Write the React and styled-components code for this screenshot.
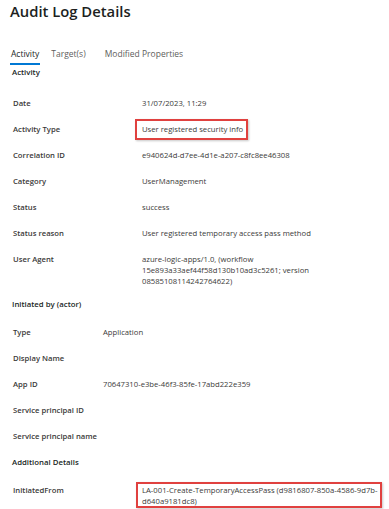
import React from 'react'
import styled, { createGlobalStyle } from 'styled-components'

const GlobalStyle = createGlobalStyle`
  html, body {
    margin: 0;
    padding: 0;
    background: #ffffff;
  }
  body {
    font-family: 'Segoe UI', 'Open Sans', 'Noto Sans', sans-serif;
    color: #323130;
  }
`

const Panel = styled.div`
  width: 389px;
  height: 509px;
  overflow: hidden;
  padding: 1px 0 0 10px;
  box-sizing: border-box;
`

const Title = styled.h1`
  margin: 0;
  font-size: 14.8px;
  line-height: 20px;
  font-weight: 600;
  color: #201f1e;
`

const Tabs = styled.div`
  display: flex;
  gap: 10px;
  margin-top: 27px;
`

const Tab = styled.div`
  font-size: 8.5px;
  line-height: 11px;
  padding: 0 1px 4px;
  color: ${props => (props.active ? '#201f1e' : '#605e5c')};
  border-bottom: 2px solid ${props => (props.active ? '#0078d4' : 'transparent')};
  margin-right: ${props => props.gapAfter || 0}px;
`

const SectionTitle = styled.div`
  font-size: 7.8px;
  font-weight: 600;
  line-height: 11px;
  padding-left: 2px;
  margin-top: ${props => props.top || 0}px;
  color: #201f1e;
`

const Rows = styled.div`
  display: grid;
  grid-template-columns: ${props => props.labelWidth}px 1fr;
  padding-left: 3px;
  margin-top: ${props => props.top || 0}px;
  row-gap: 15px;
`

const Label = styled.div`
  font-size: 7.7px;
  line-height: 11px;
  font-weight: 600;
  white-space: nowrap;
  color: #3b3a39;
`

const Value = styled.div`
  font-size: 7.7px;
  line-height: 11px;
  white-space: nowrap;
  color: #3b3a39;
`

const Highlight = styled.span`
  display: inline-block;
  box-sizing: border-box;
  width: ${props => props.width}px;
  margin: ${props => (props.tight ? '-3px 0 -2px -6px' : '-5px 0 -5px -7px')};
  padding: ${props => (props.tight ? '1px 4px 0' : '3px 5px')};
  line-height: ${props => (props.tight ? '10.5px' : '11px')};
  border: 2px solid #e0413f;
  box-shadow: 1px 1px 2px rgba(0, 0, 0, 0.22);
`

const activity = [
  ['Date', '31/07/2023, 11:29'],
  ['Activity Type', <Highlight width={113}>User registered security info</Highlight>],
  ['Correlation ID', 'e940624d-d7ee-4d1e-a207-c8fc8ee46308'],
  ['Category', 'UserManagement'],
  ['Status', 'success'],
  ['Status reason', 'User registered temporary access pass method'],
  [
    'User Agent',
    <>
      azure-logic-apps/1.0, (workflow
      <br />
      15e893a33aef44f58d130b10ad3c5261; version
      <br />
      08585108114242764622)
    </>,
  ],
]

const actor = [
  ['Type', 'Application'],
  ['Display Name', ''],
  ['App ID', '70647310-e3be-46f3-85fe-17abd222e359'],
  ['Service principal ID', ''],
  ['Service principal name', ''],
]

const DetailRows = ({ items, labelWidth, top }) => (
  <Rows labelWidth={labelWidth} top={top}>
    {items.map(([label, value]) => (
      <React.Fragment key={label}>
        <Label>{label}</Label>
        <Value>{value}</Value>
      </React.Fragment>
    ))}
  </Rows>
)

export default function App() {
  return (
    <>
      <GlobalStyle />
      <Panel>
        <Title>Audit Log Details</Title>
        <Tabs>
          <Tab active>Activity</Tab>
          <Tab gapAfter={7}>Target(s)</Tab>
          <Tab>Modified Properties</Tab>
        </Tabs>
        <SectionTitle top={2}>Activity</SectionTitle>
        <DetailRows items={activity} labelWidth={129} top={20} />
        <SectionTitle top={12}>Initiated by (actor)</SectionTitle>
        <DetailRows items={actor} labelWidth={90} top={17} />
        <SectionTitle top={15}>Additional Details</SectionTitle>
        <DetailRows
          labelWidth={129}
          top={17}
          items={[
            [
              'InitiatedFrom',
              <Highlight width={246} tight>
                LA-001-Create-TemporaryAccessPass (d9816807-850a-4586-9d7b-
                <br />
                d640a9181dc8)
              </Highlight>,
            ],
          ]}
        />
      </Panel>
    </>
  )
}
